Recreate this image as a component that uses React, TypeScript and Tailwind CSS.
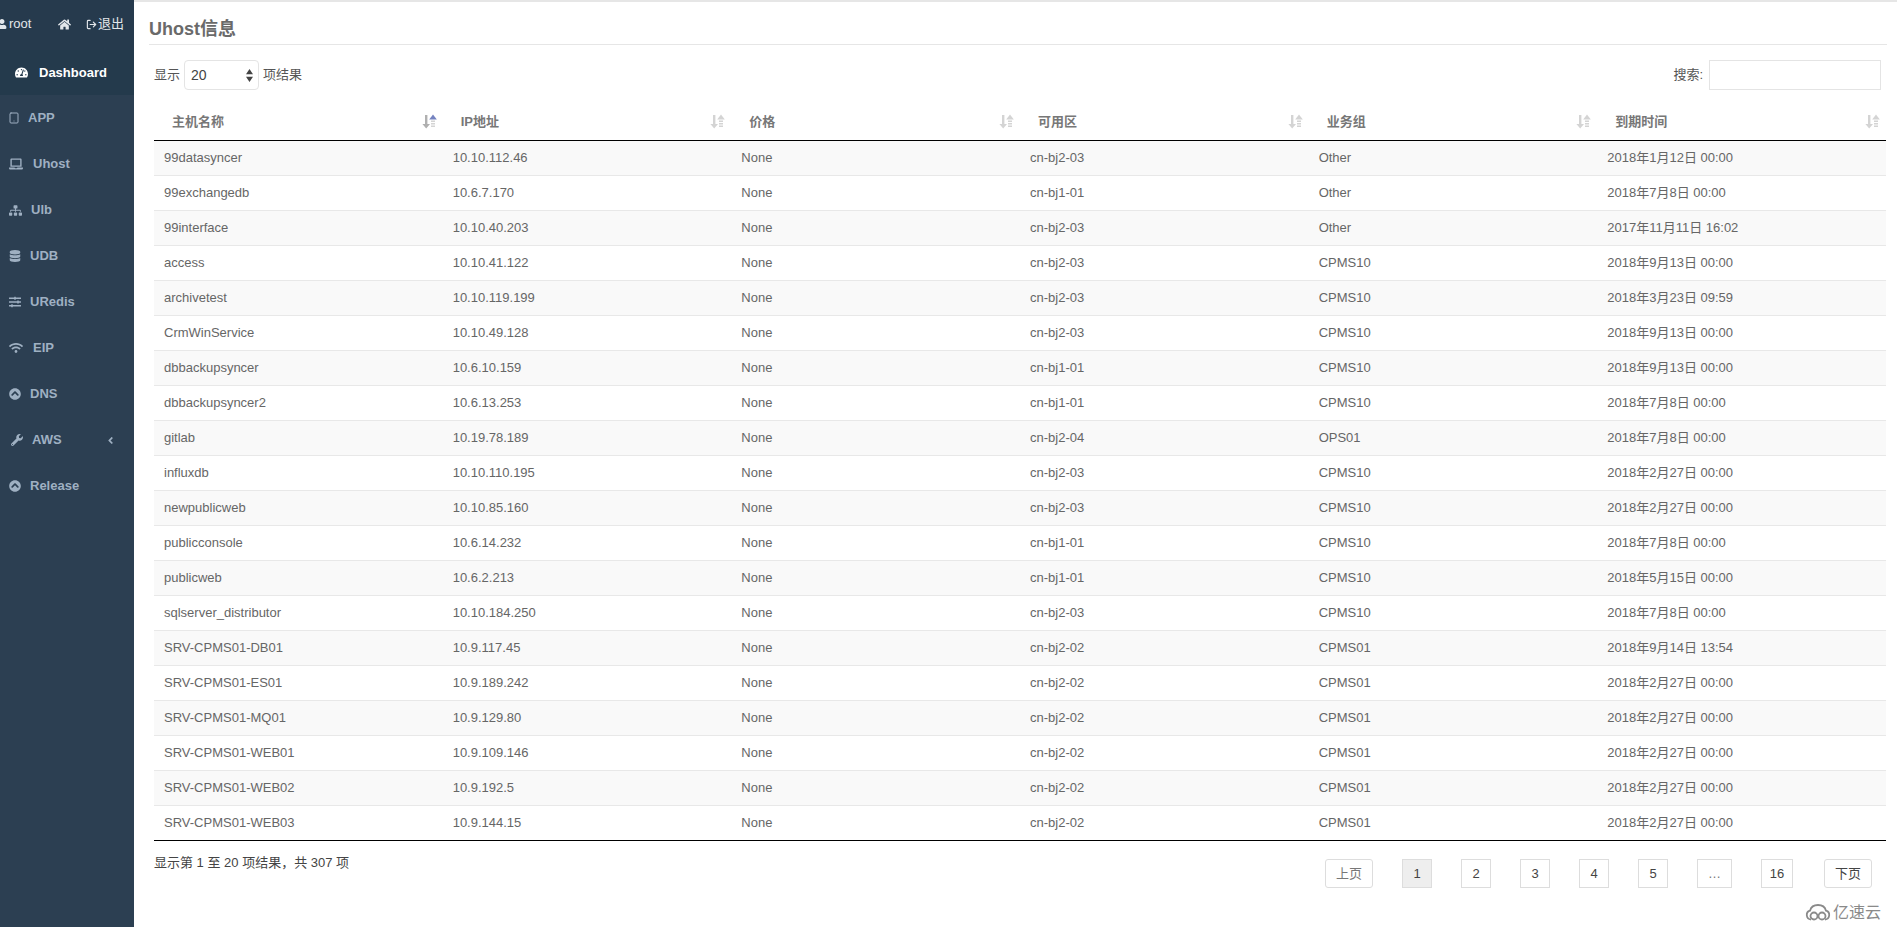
import React from "react";
import {
  FaTachometerAlt,
  FaLaptop,
  FaSitemap,
  FaDatabase,
  FaSlidersH,
  FaWifi,
  FaChevronCircleUp,
  FaWrench,
  FaAngleLeft,
  FaHome,
  FaUser,
} from "react-icons/fa";
import { Tablet, LogOut } from "lucide-react";

const font = "font-['Liberation_Sans','Noto_Sans_CJK_SC',sans-serif]";

const rows = [
  ["99datasyncer", "10.10.112.46", "cn-bj2-03", "Other", "2018年1月12日 00:00"],
  ["99exchangedb", "10.6.7.170", "cn-bj1-01", "Other", "2018年7月8日 00:00"],
  ["99interface", "10.10.40.203", "cn-bj2-03", "Other", "2017年11月11日 16:02"],
  ["access", "10.10.41.122", "cn-bj2-03", "CPMS10", "2018年9月13日 00:00"],
  ["archivetest", "10.10.119.199", "cn-bj2-03", "CPMS10", "2018年3月23日 09:59"],
  ["CrmWinService", "10.10.49.128", "cn-bj2-03", "CPMS10", "2018年9月13日 00:00"],
  ["dbbackupsyncer", "10.6.10.159", "cn-bj1-01", "CPMS10", "2018年9月13日 00:00"],
  ["dbbackupsyncer2", "10.6.13.253", "cn-bj1-01", "CPMS10", "2018年7月8日 00:00"],
  ["gitlab", "10.19.78.189", "cn-bj2-04", "OPS01", "2018年7月8日 00:00"],
  ["influxdb", "10.10.110.195", "cn-bj2-03", "CPMS10", "2018年2月27日 00:00"],
  ["newpublicweb", "10.10.85.160", "cn-bj2-03", "CPMS10", "2018年2月27日 00:00"],
  ["publicconsole", "10.6.14.232", "cn-bj1-01", "CPMS10", "2018年7月8日 00:00"],
  ["publicweb", "10.6.2.213", "cn-bj1-01", "CPMS10", "2018年5月15日 00:00"],
  ["sqlserver_distributor", "10.10.184.250", "cn-bj2-03", "CPMS10", "2018年7月8日 00:00"],
  ["SRV-CPMS01-DB01", "10.9.117.45", "cn-bj2-02", "CPMS01", "2018年9月14日 13:54"],
  ["SRV-CPMS01-ES01", "10.9.189.242", "cn-bj2-02", "CPMS01", "2018年2月27日 00:00"],
  ["SRV-CPMS01-MQ01", "10.9.129.80", "cn-bj2-02", "CPMS01", "2018年2月27日 00:00"],
  ["SRV-CPMS01-WEB01", "10.9.109.146", "cn-bj2-02", "CPMS01", "2018年2月27日 00:00"],
  ["SRV-CPMS01-WEB02", "10.9.192.5", "cn-bj2-02", "CPMS01", "2018年2月27日 00:00"],
  ["SRV-CPMS01-WEB03", "10.9.144.15", "cn-bj2-02", "CPMS01", "2018年2月27日 00:00"],
];

const headers = ["主机名称", "IP地址", "价格", "可用区", "业务组", "到期时间"];

const navItems = [
  { label: "APP", icon: <Tablet size={12} strokeWidth={2} />, gap: "gap-[8px]", left: "pl-[8px]" },
  { label: "Uhost", icon: <FaLaptop size={14} />, gap: "gap-[10px]", left: "pl-[9px]" },
  { label: "Ulb", icon: <FaSitemap size={13} />, gap: "gap-[9px]", left: "pl-[9px]" },
  { label: "UDB", icon: <FaDatabase size={12} />, gap: "gap-[9px]", left: "pl-[9px]" },
  { label: "URedis", icon: <FaSlidersH size={12} />, gap: "gap-[9px]", left: "pl-[9px]" },
  { label: "EIP", icon: <FaWifi size={14} />, gap: "gap-[10px]", left: "pl-[9px]" },
  { label: "DNS", icon: <FaChevronCircleUp size={12} />, gap: "gap-[9px]", left: "pl-[9px]" },
  { label: "AWS", icon: <FaWrench size={12} />, gap: "gap-[9px]", left: "pl-[11px]", arrow: true },
  { label: "Release", icon: <FaChevronCircleUp size={12} />, gap: "gap-[9px]", left: "pl-[9px]" },
];

const SortIcon = ({ active }: { active?: boolean }) => (
  <svg width="15" height="15" viewBox="0 0 15 15" className="shrink-0">
    <path d="M3 1h2.400v9H8l-3.800 4.500L.4 10H3z" fill={active ? "#b0b0b0" : "#d4d4d4"} />
    <path d="M11 0.500l3.800 5H7.200z" fill={active ? "#7583c0" : "#d4d4d4"} />
    <path d="M9 6.500h4V8H9zM9 9h4v1.500H9zM9 11.500h4V13H9z" fill="#d4d4d4" />
  </svg>
);

const pages = ["1", "2", "3", "4", "5", "…", "16"];

export default function App() {
  return (
    <div className={`${font} flex h-[927px] w-[1897px] overflow-hidden bg-white text-[13px] text-[#666]`}>
      <aside className="flex w-[134px] shrink-0 flex-col bg-[#2c3f52] font-bold text-[#9fb0c2]">
        <div className="flex h-[50px] items-center bg-[#263a4d] pb-[2px] pl-0 pr-[10px] font-normal text-[#e2e6ea]">
          <FaUser size={10} className="-ml-[3px]" />
          <span className="ml-[2px] text-[13px]">root</span>
          <FaHome size={13} className="ml-auto" />
          <span className="ml-[15px] flex items-center gap-[1px] text-[13px]">
            <LogOut size={11} strokeWidth={2.5} />
            退出
          </span>
        </div>
        <div className="flex h-[45px] items-center gap-[11px] bg-[#243a4c] pl-[15px] text-white">
          <FaTachometerAlt size={13} />
          Dashboard
        </div>
        <nav className="flex flex-col">
          {navItems.map((item) => (
            <div key={item.label} className={`flex h-[46px] items-center ${item.gap} ${item.left} pr-[18px] text-[13px]`}>
              {item.icon}
              <span>{item.label}</span>
              {item.arrow && <FaAngleLeft size={11} className="ml-auto" />}
            </div>
          ))}
        </nav>
      </aside>

      <main className="relative flex min-w-0 flex-1 flex-col border-t-[2px] border-[#e6e6e6]">
        <h1 className="ml-[15px] mr-[10px] flex h-[43px] items-center border-b border-[#e6e6e6] pt-[13px] text-[18px] font-bold text-[#6a6a6a]">
          Uhost信息
        </h1>

        <div className="mt-[15px] ml-[20px] mr-[16px] flex h-[30px] items-center justify-between text-[#555]">
          <div className="flex items-center gap-[4px]">
            <span>显示</span>
            <div className="flex h-[30px] w-[75px] items-center justify-between rounded-[4px] border border-[#e4e4e4] pl-[6px] pr-[5px] text-[14px] text-[#444]">
              20
              <svg width="7" height="13" viewBox="0 0 7 13">
                <path d="M3.500 0L7 5.200H0zM3.500 13L0 7.800h7z" fill="#444" />
              </svg>
            </div>
            <span>项结果</span>
          </div>
          <div className="flex items-center gap-[6px]">
            <span>搜索:</span>
            <div className="h-[30px] w-[172px] border border-[#e4e4e4]" />
          </div>
        </div>

        <table className="mt-[13px] ml-[20px] w-[1732px] table-fixed border-collapse">
          <thead>
            <tr className="h-[37px] border-b border-[#000]">
              {headers.map((h, i) => (
                <th key={h} className="p-0 pl-[18px] pr-[6px] text-left font-bold text-[#777]">
                  <div className="flex items-center justify-between">
                    <span>{h}</span>
                    <SortIcon active={i === 0} />
                  </div>
                </th>
              ))}
            </tr>
          </thead>
          <tbody>
            {rows.map((r, i) => (
              <tr key={r[0]} className={`h-[35px] border-b border-[#e8e8e8] last:border-b-0 ${i % 2 === 0 ? "bg-[#f9f9f9]" : "bg-white"}`}>
                <td className="p-0 pl-[10px]">{r[0]}</td>
                <td className="p-0 pl-[10px]">{r[1]}</td>
                <td className="p-0 pl-[10px]">None</td>
                <td className="p-0 pl-[10px]">{r[2]}</td>
                <td className="p-0 pl-[10px]">{r[3]}</td>
                <td className="p-0 pl-[10px]">{r[4]}</td>
              </tr>
            ))}
          </tbody>
        </table>
        <div className="ml-[20px] w-[1732px] border-t border-[#000]" />

        <div className="ml-[20px] mr-[25px] flex items-start justify-between">
          <div className="mt-[12px] text-[#444]">显示第 1 至 20 项结果，共 307 项</div>
          <div className="mt-[18px] flex items-center gap-[29px] text-[#444]">
            <div className="flex h-[29px] w-[48px] items-center justify-center rounded-[3px] border border-[#ddd] text-[#777]">上页</div>
            {pages.map((p, i) => (
              <div
                key={p}
                className={`flex h-[29px] items-center justify-center border border-[#ddd] ${i === 0 ? "bg-[#eee]" : ""} ${p === "…" ? "w-[35px] text-[#777]" : p === "16" ? "w-[32px]" : "w-[30px]"}`}
              >
                {p}
              </div>
            ))}
            <div className="ml-[2px] flex h-[29px] w-[48px] items-center justify-center rounded-[3px] border border-[#ddd]">下页</div>
          </div>
        </div>

        <div className="absolute bottom-[2px] right-[16px] flex items-center gap-[2px] text-[16px] text-[#8a8a8a]">
          <svg width="26" height="18" viewBox="0 0 26 18" fill="none" stroke="#8a8a8a" strokeWidth="1.800">
            <path d="M6 15.500a4.500 4.500 0 0 1-1-8.800C6 3 9 1 13 1s7 2 8 5.700a4.500 4.500 0 0 1-1 8.800" />
            <circle cx="9" cy="12" r="3.500" />
            <circle cx="17" cy="12" r="3.500" />
          </svg>
          亿速云
        </div>
      </main>
    </div>
  );
}
